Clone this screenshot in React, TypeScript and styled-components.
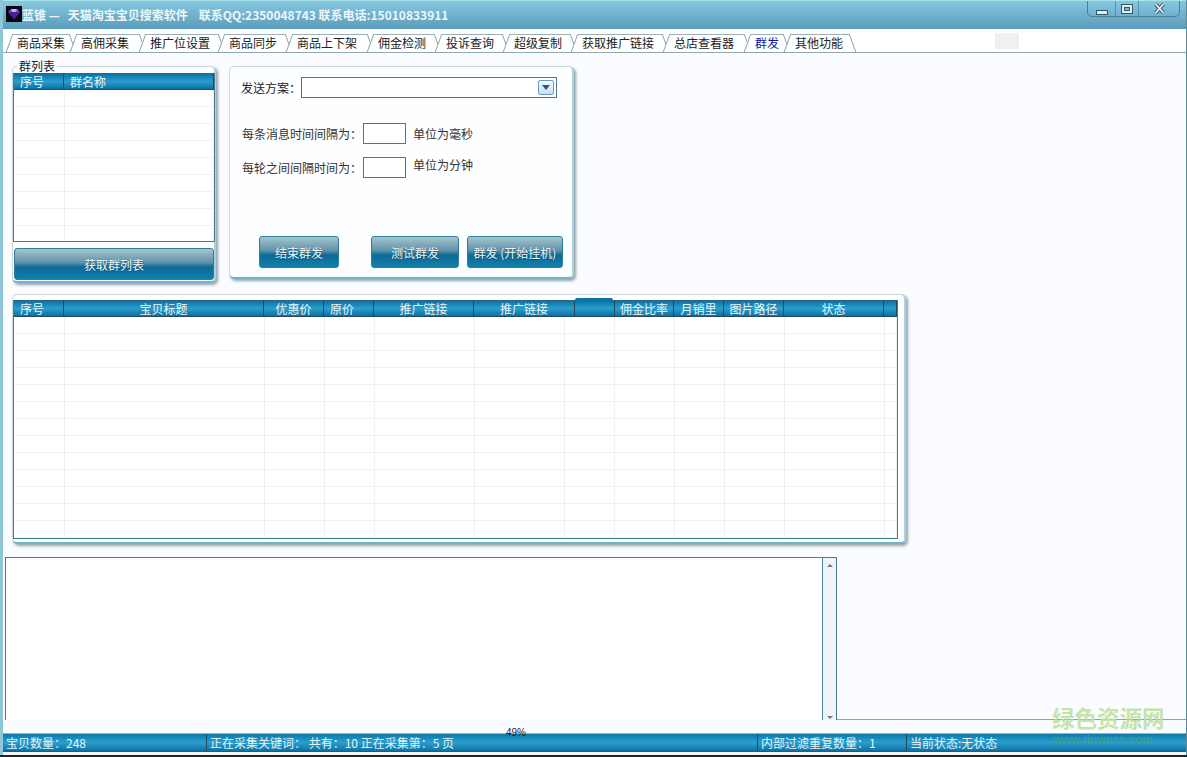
import { createGlobalStyle, styled } from 'styled-components';

const TABS = [
  { label: '商品采集', width: 64 },
  { label: '高佣采集', width: 69 },
  { label: '推广位设置', width: 79 },
  { label: '商品同步', width: 68 },
  { label: '商品上下架', width: 81 },
  { label: '佣金检测', width: 68 },
  { label: '投诉查询', width: 68 },
  { label: '超级复制', width: 68 },
  { label: '获取推广链接', width: 92 },
  { label: '总店查看器', width: 81 },
  { label: '群发', width: 40, active: true },
  { label: '其他功能', width: 66 },
];

const HEAD_COLS = [
  { label: '序号', width: 50, left: true },
  { label: '宝贝标题', width: 200 },
  { label: '优惠价', width: 60 },
  { label: '原价', width: 50, left: true },
  { label: '推广链接', width: 100 },
  { label: '推广链接', width: 101 },
  { label: '', width: 40 },
  { label: '佣金比率', width: 59 },
  { label: '月销里', width: 50 },
  { label: '图片路径', width: 60 },
  { label: '状态', width: 100 },
  { label: '', width: 13 },
];

const BODY_COLS = [51, 200, 60, 50, 100, 90, 50, 60, 50, 60, 100, 12];

const GlobalStyle = createGlobalStyle`
  * {
    box-sizing: border-box;
  }

  body {
    margin: 0;
    background: #222;
    font-family: 'Noto Sans CJK SC', 'Liberation Sans', sans-serif;
    font-size: 12px;
    color: #222;
  }
`;

const S = {
  Window: styled.div`
    position: relative;
    display: flex;
    flex-direction: column;
    width: 1187px;
    height: 755px;
    overflow: hidden;
    background: #fafcff;
    border-left: 3px solid #8fc6d8;
    border-right: 1px solid #5f8796;
  `,

  TitleBar: styled.div`
    display: flex;
    align-items: flex-start;
    justify-content: space-between;
    flex: none;
    height: 29px;
    margin-left: -3px;
    background: linear-gradient(#86c8e0, #5a9cba);
    border-top: 1px solid #a8e4e8;
  `,

  TitleLeft: styled.div`
    display: flex;
    align-items: center;
    height: 26px;
    padding-left: 6px;
    font-size: 12px;
    font-weight: 700;
    color: #eef6fa;
    white-space: pre;
  `,

  AppIcon: styled.svg`
    flex: none;
    width: 16px;
    height: 16px;
  `,

  WindowButtons: styled.div`
    display: flex;
    height: 16px;
    margin-right: 6px;
    border: 1px solid #4a8098;
    border-top: none;
    border-radius: 0 0 5px 5px;
  `,

  WindowButton: styled.div<{ $width: number }>`
    display: flex;
    align-items: center;
    justify-content: center;
    width: ${({ $width }) => $width}px;
    border-left: 1px solid #5c90a8;

    &:first-child {
      border-left: none;
    }
  `,

  TabBar: styled.div`
    display: flex;
    flex: none;
    height: 24px;
    padding-left: 6px;
    background: #fff;
    border-bottom: 1px solid #90a9b3;
  `,

  Tab: styled.div<{ $width: number; $active?: boolean }>`
    position: relative;
    isolation: isolate;
    display: flex;
    align-items: center;
    flex: none;
    width: ${({ $width }) => $width}px;
    padding: 3px 0 0 8px;
    font-size: 12px;
    color: ${({ $active }) => ($active ? '#14149a' : '#222')};
    white-space: nowrap;

    &::before,
    &::after {
      content: '';
      position: absolute;
      z-index: -1;
      top: 5px;
      bottom: 0;
      width: 50%;
      background: #fff;
      border-top: 1px solid #9cb0b8;
    }

    &::before {
      left: 0;
      border-left: 1px solid #8aa2ac;
      transform: skewX(-20deg);
    }

    &::after {
      right: 0;
      border-right: 1px solid #8aa2ac;
      transform: skewX(20deg);
    }
  `,

  GrayPatch: styled.div`
    flex: none;
    width: 24px;
    height: 16px;
    margin: 4px 0 0 142px;
    background: #f0f0f0;
  `,

  TopRow: styled.div`
    display: flex;
    flex: none;
    align-items: flex-start;
    gap: 13px;
    margin: 13px 0 0 9px;
  `,

  Panel: styled.div<{ $width: number; $height: number }>`
    position: relative;
    flex: none;
    width: ${({ $width }) => $width}px;
    height: ${({ $height }) => $height}px;
    background: #fdfeff;
    border: 1px solid #d0d6d9;
    border-right: 2px solid #a4d4e2;
    border-bottom: 2px solid #6fb6cc;
    border-radius: 5px;
    box-shadow: 2px 2px 3px rgba(70, 90, 100, 0.55);
  `,

  GroupPanel: styled.div`
    display: flex;
    flex-direction: column;
    gap: 6px;
    height: 100%;
    padding: 6px 0 0 0;
  `,

  Legend: styled.span`
    position: absolute;
    top: -8px;
    left: 4px;
    padding: 0 2px;
    background: #fafcff;
    font-size: 12px;
    line-height: 14px;
  `,

  Grid: styled.div<{ $width: number; $height?: number }>`
    flex: none;
    width: ${({ $width }) => $width}px;
    height: ${({ $height }) => ($height ? `${$height}px` : 'auto')};
    overflow: hidden;
    background: #fff;
    border: 1px solid #4b7a8b;
    border-top: none;
  `,

  HeadRow: styled.div`
    display: flex;
    height: 17px;
  `,

  HeadCell: styled.div<{ $width: number; $left?: boolean }>`
    flex: none;
    width: ${({ $width }) => $width}px;
    height: 17px;
    padding-left: ${({ $left }) => ($left ? '6px' : '0')};
    font-size: 12px;
    line-height: 16px;
    text-align: ${({ $left }) => ($left ? 'left' : 'center')};
    color: #eaf6fb;
    background: linear-gradient(#0b73a6, #2a9dcd 50%, #0d70a0);
    border-top: 1px solid #2c6580;
    border-right: 1px solid #24495a;
    border-bottom: 1px solid #24495a;
  `,

  BodyRow: styled.div`
    display: flex;
    height: 17px;
  `,

  BodyCell: styled.div<{ $width: number }>`
    flex: none;
    width: ${({ $width }) => $width}px;
    border-right: 1px solid #eef0f1;
    border-bottom: 1px solid #eef0f1;
  `,

  GradientButton: styled.button<{ $width: number; $height: number }>`
    display: block;
    flex: none;
    width: ${({ $width }) => $width}px;
    height: ${({ $height }) => $height}px;
    padding: 0;
    font-family: inherit;
    font-size: 12px;
    color: #eef6fa;
    white-space: nowrap;
    background: linear-gradient(#a8c4ce, #5d93a8 45%, #0d6a94 60%, #1280ac);
    border: 1px solid #2f7d98;
    border-radius: 3px;
    text-shadow: 0 1px 1px rgba(20, 50, 70, 0.6);
  `,

  WideButtonWrap: styled.div`
    padding-left: 1px;
  `,

  SendPanel: styled.div`
    display: flex;
    flex-direction: column;
    height: 100%;
    padding: 10px 0 0 11px;
  `,

  PlanRow: styled.div`
    display: flex;
    align-items: center;
    height: 21px;
  `,

  PlanLabel: styled.span`
    flex: none;
    width: 60px;
    font-size: 12px;
  `,

  ComboBox: styled.div`
    display: flex;
    align-items: center;
    justify-content: flex-end;
    width: 256px;
    height: 21px;
    padding-right: 2px;
    background: #fff;
    border: 1px solid #4b7a8b;
  `,

  ComboArrow: styled.div`
    display: flex;
    align-items: center;
    justify-content: center;
    width: 16px;
    height: 15px;
    background: linear-gradient(#f4f9fd, #c8dff0);
    border: 1px solid #6f9ec4;
    border-radius: 2px;
  `,

  ArrowGlyph: styled.div`
    width: 0;
    height: 0;
    border-left: 4px solid transparent;
    border-right: 4px solid transparent;
    border-top: 5px solid #33508c;
  `,

  IntervalRow: styled.div<{ $top: number }>`
    display: flex;
    align-items: center;
    margin-top: ${({ $top }) => $top}px;
  `,

  IntervalLabel: styled.span`
    flex: none;
    width: 122px;
    padding-left: 1px;
    font-size: 12px;
    color: #333;
  `,

  NumberBox: styled.div`
    flex: none;
    width: 43px;
    height: 21px;
    background: #fff;
    border: 1px solid #4b7a8b;
  `,

  Unit: styled.span<{ $lift: number }>`
    margin: -${({ $lift }) => $lift}px 0 0 7px;
    font-size: 12px;
    color: #333;
  `,

  ActionRow: styled.div`
    display: flex;
    margin-top: auto;
    margin-bottom: 9px;
    padding-left: 18px;
  `,

  ActionSlot: styled.div<{ $gap: number }>`
    margin-left: ${({ $gap }) => $gap}px;
  `,

  TablePanelRow: styled.div`
    flex: none;
    margin: 11px 0 0 9px;
  `,

  TablePanelInner: styled.div`
    padding-top: 5px;
  `,

  LogRow: styled.div`
    display: flex;
    flex: none;
    height: 163px;
    margin-top: 13px;
  `,

  LogBox: styled.div`
    display: flex;
    justify-content: flex-end;
    flex: none;
    width: 832px;
    margin-left: 2px;
    background: #fff;
    border: 1px solid #4b7a8b;
    border-bottom: none;
  `,

  ScrollBar: styled.div`
    display: flex;
    flex-direction: column;
    align-items: center;
    justify-content: space-between;
    width: 14px;
    padding: 6px 0 0;
    background: #eef4f8;
    border-left: 1px solid #4f8aa0;
  `,

  ScrollArrow: styled.div<{ $up?: boolean }>`
    width: 0;
    height: 0;
    border-left: 3px solid transparent;
    border-right: 3px solid transparent;
    border-bottom: ${({ $up }) => ($up ? '3px solid #777' : 'none')};
    border-top: ${({ $up }) => ($up ? 'none' : '3px solid #777')};
    margin-bottom: ${({ $up }) => ($up ? '0' : '1px')};
  `,

  LogFiller: styled.div`
    flex: 1;
    border-bottom: 1px solid #8aa4ae;
  `,

  StatusBar: styled.div`
    display: flex;
    flex: none;
    height: 19px;
    margin: auto 0 3px;
    font-size: 12px;
    line-height: 17px;
    color: #e4f3fa;
    background: linear-gradient(#0b78ac, #2a9ecd 50%, #0d72a2);
    border-top: 1px solid #7cc0d4;
    border-bottom: 1px solid #2c5a70;
  `,

  StatusCell: styled.div<{ $width?: number }>`
    flex: ${({ $width }) => ($width ? 'none' : '1')};
    width: ${({ $width }) => ($width ? `${$width}px` : 'auto')};
    padding-left: 3px;
    border-right: 1px solid #1c4a60;
    white-space: pre;

    &:last-child {
      border-right: none;
    }
  `,

  Progress: styled.span`
    position: absolute;
    left: 503px;
    top: 727px;
    font-family: 'Liberation Sans', sans-serif;
    font-size: 10px;
    color: #222;
  `,

  WatermarkTitle: styled.span`
    position: absolute;
    left: 1049px;
    top: 702px;
    font-size: 22.5px;
    font-weight: 700;
    line-height: 30px;
    color: #bfe2a2;
    opacity: 0.9;
  `,

  WatermarkUrl: styled.span`
    position: absolute;
    left: 1050px;
    top: 733px;
    font-family: 'Liberation Sans', sans-serif;
    font-size: 12.5px;
    color: #3f9f8a;
  `,

  BottomEdge: styled.div`
    position: absolute;
    left: -3px;
    right: 0;
    top: 752px;
    height: 3px;
    background: #f4f7f9;
  `,

  // 表头上那块凸起，盖在表头之上
  HeaderBlob: styled.div`
    position: absolute;
    left: 562px;
    top: 3px;
    width: 38px;
    height: 4px;
    background: #0b73a6;
    border-radius: 2px 2px 0 0;
  `,
};

function DataGrid({ width, height, headCols, bodyCols, rowCount }: any) {
  return (
    <S.Grid $width={width} $height={height}>
      <S.HeadRow>
        {headCols.map((col: any, idx: number) => (
          <S.HeadCell key={idx} $width={col.width} $left={col.left}>
            {col.label}
          </S.HeadCell>
        ))}
      </S.HeadRow>
      {Array.from({ length: rowCount }).map((_, row) => (
        <S.BodyRow key={row}>
          {bodyCols.map((w: number, idx: number) => (
            <S.BodyCell key={idx} $width={w} />
          ))}
        </S.BodyRow>
      ))}
    </S.Grid>
  );
}

function App() {
  return (
    <>
      <GlobalStyle />
      <S.Window>
        <S.TitleBar>
          <S.TitleLeft>
            <S.AppIcon viewBox="0 0 16 16">
              <rect width="16" height="16" fill="#07060f" />
              <path d="M2 6 L5 3 H11 L14 6 L8 13 Z" fill="#7a3fd0" />
              <path d="M2 6 H14 L8 13 Z" fill="#4b1f9a" />
              <path d="M5 3 L6 6 H10 L11 3 Z" fill="#c9a8f5" />
            </S.AppIcon>
            {'蓝锥 —   天猫淘宝宝贝搜索软件    联系QQ:2350048743 联系电话:15010833911'}
          </S.TitleLeft>
          <S.WindowButtons>
            <S.WindowButton $width={27}>
              <svg width="12" height="14" viewBox="0 0 12 14">
                <rect x="0.5" y="8.5" width="11" height="4" fill="#e4eef2" stroke="#35566a" />
              </svg>
            </S.WindowButton>
            <S.WindowButton $width={23}>
              <svg width="12" height="10" viewBox="0 0 12 10">
                <rect x="0.5" y="0.5" width="11" height="9" fill="#e4eef2" stroke="#35566a" />
                <rect x="3.5" y="3.5" width="5" height="3" fill="#7fb4cc" stroke="#35566a" />
              </svg>
            </S.WindowButton>
            <S.WindowButton $width={41}>
              <svg width="11" height="11" viewBox="0 0 11 11">
                <path d="M1.5 1 L9.5 10 M9.5 1 L1.5 10" stroke="#35566a" strokeWidth="3.6" />
                <path d="M1.5 1 L9.5 10 M9.5 1 L1.5 10" stroke="#eef4f6" strokeWidth="1.8" />
              </svg>
            </S.WindowButton>
          </S.WindowButtons>
        </S.TitleBar>

        <S.TabBar>
          {TABS.map((tab) => (
            <S.Tab key={tab.label} $width={tab.width} $active={tab.active}>
              {tab.label}
            </S.Tab>
          ))}
          <S.GrayPatch />
        </S.TabBar>

        <S.TopRow>
          <S.Panel $width={204} $height={217}>
            <S.Legend>群列表</S.Legend>
            <S.GroupPanel>
              <DataGrid
                width={202}
                height={169}
                headCols={[
                  { label: '序号', width: 50, left: true },
                  { label: '群名称', width: 150, left: true },
                ]}
                bodyCols={[51, 149]}
                rowCount={9}
              />
              <S.WideButtonWrap>
                <S.GradientButton $width={200} $height={32}>
                  获取群列表
                </S.GradientButton>
              </S.WideButtonWrap>
            </S.GroupPanel>
          </S.Panel>

          <S.Panel $width={345} $height={213}>
            <S.SendPanel>
              <S.PlanRow>
                <S.PlanLabel>发送方案：</S.PlanLabel>
                <S.ComboBox>
                  <S.ComboArrow>
                    <S.ArrowGlyph />
                  </S.ComboArrow>
                </S.ComboBox>
              </S.PlanRow>
              <S.IntervalRow $top={25}>
                <S.IntervalLabel>每条消息时间间隔为：</S.IntervalLabel>
                <S.NumberBox />
                <S.Unit $lift={0}>单位为毫秒</S.Unit>
              </S.IntervalRow>
              <S.IntervalRow $top={13}>
                <S.IntervalLabel>每轮之间间隔时间为：</S.IntervalLabel>
                <S.NumberBox />
                <S.Unit $lift={6}>单位为分钟</S.Unit>
              </S.IntervalRow>
              <S.ActionRow>
                <S.GradientButton $width={80} $height={32}>
                  结束群发
                </S.GradientButton>
                <S.ActionSlot $gap={32}>
                  <S.GradientButton $width={88} $height={32}>
                    测试群发
                  </S.GradientButton>
                </S.ActionSlot>
                <S.ActionSlot $gap={8}>
                  <S.GradientButton $width={96} $height={32}>
                    群发 (开始挂机)
                  </S.GradientButton>
                </S.ActionSlot>
              </S.ActionRow>
            </S.SendPanel>
          </S.Panel>
        </S.TopRow>

        <S.TablePanelRow>
          <S.Panel $width={894} $height={250}>
            <S.HeaderBlob />
            <S.TablePanelInner>
              <DataGrid width={885} headCols={HEAD_COLS} bodyCols={BODY_COLS} rowCount={13} />
            </S.TablePanelInner>
          </S.Panel>
        </S.TablePanelRow>

        <S.LogRow>
          <S.LogBox>
            <S.ScrollBar>
              <S.ScrollArrow $up />
              <S.ScrollArrow />
            </S.ScrollBar>
          </S.LogBox>
          <S.LogFiller />
        </S.LogRow>

        <S.StatusBar>
          <S.StatusCell $width={204}>宝贝数量：248</S.StatusCell>
          <S.StatusCell $width={551}>{'正在采集关键词： 共有：10 正在采集第：5 页'}</S.StatusCell>
          <S.StatusCell $width={149}>内部过滤重复数量：1</S.StatusCell>
          <S.StatusCell>当前状态:无状态</S.StatusCell>
        </S.StatusBar>

        <S.BottomEdge />
        <S.Progress>49%</S.Progress>
        <S.WatermarkTitle>绿色资源网</S.WatermarkTitle>
        <S.WatermarkUrl>www.downcc.com</S.WatermarkUrl>
      </S.Window>
    </>
  );
}

export default App;
